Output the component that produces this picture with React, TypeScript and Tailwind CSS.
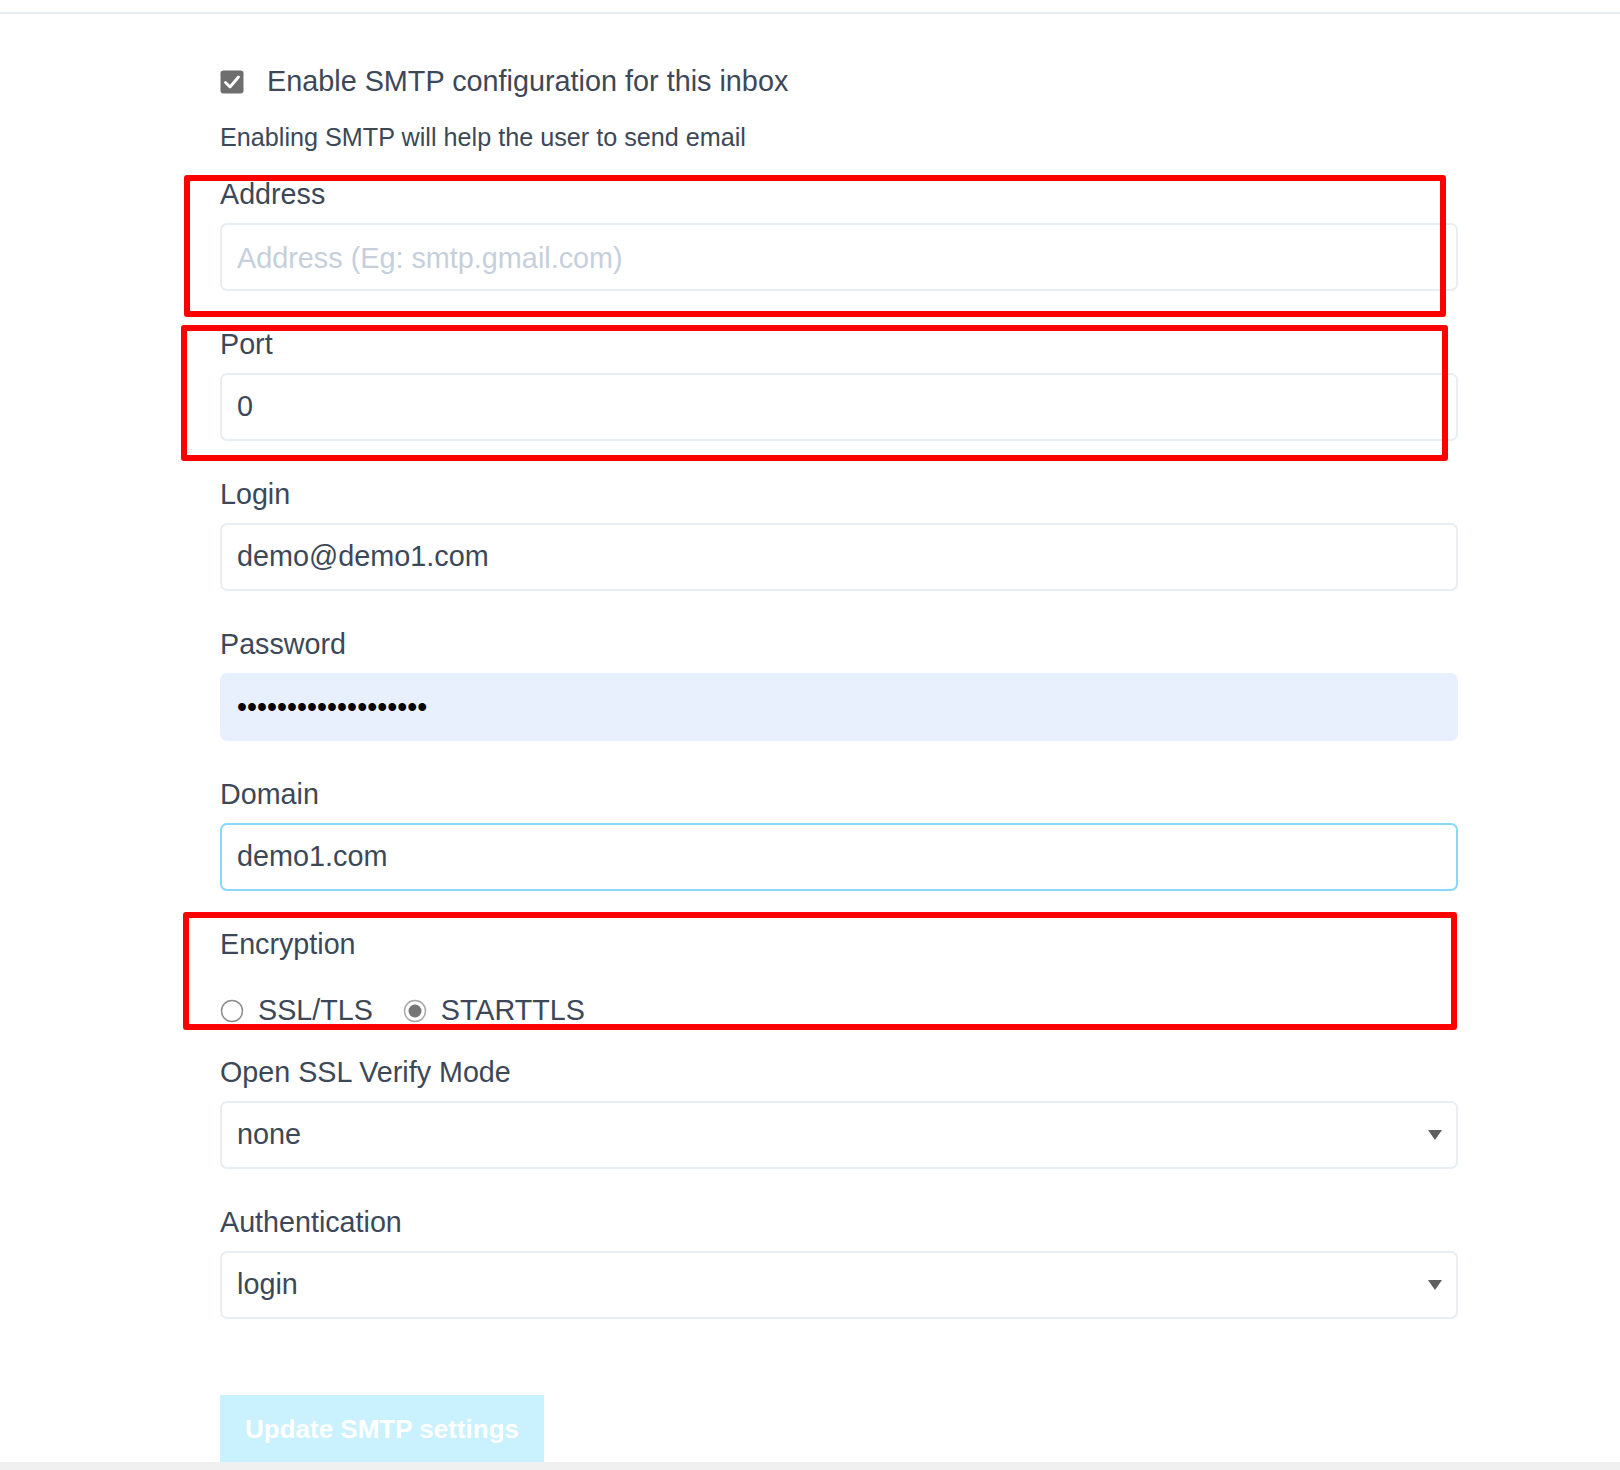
import React from 'react';

const font = { fontFamily: '"Liberation Sans", Arial, sans-serif' };

function Label({ children }: { children: React.ReactNode }) {
  return <div className="h-[36px] leading-[36px] text-[28.7px] text-[#3c4858]">{children}</div>;
}

function Field({ label, children }: { label: string; children: React.ReactNode }) {
  return (
    <div className="flex flex-col">
      <Label>{label}</Label>
      <div className="mt-[11px]">{children}</div>
    </div>
  );
}

function TextBox({ value, placeholder, variant }: { value?: string; placeholder?: string; variant?: 'focus' | 'autofill' }) {
  const box =
    variant === 'focus'
      ? 'border-[#86d9f9] bg-white'
      : variant === 'autofill'
      ? 'border-[#e8f0fe] bg-[#e8f0fe]'
      : 'border-[#e9eef3] bg-white';
  return (
    <div className={`h-[68px] w-full rounded-[7px] border-2 pl-[15px] flex items-center text-[28.8px] ${box}`}>
      {value ? (
        <span className="text-[#3c4858]">{value}</span>
      ) : (
        <span className="text-[#c5d0dc] pt-[4px]">{placeholder}</span>
      )}
    </div>
  );
}

function SelectBox({ value }: { value: string }) {
  return (
    <div className="h-[68px] w-full rounded-[7px] border-2 border-[#e9eef3] bg-white pl-[15px] pr-[14px] flex items-center justify-between text-[28.8px] text-[#3c4858]">
      <span>{value}</span>
      <svg width="14" height="10" viewBox="0 0 14 10">
        <path d="M0 0 H14 L7 10 Z" fill="#5f5f5f" />
      </svg>
    </div>
  );
}

function Radio({ checked, label }: { checked?: boolean; label: string }) {
  return (
    <div className="flex items-center gap-[14px]">
      <svg width="24" height="24" viewBox="0 0 24 24">
        <circle cx="12" cy="12" r="10.5" fill="#fff" stroke={checked ? '#a8a8a8' : '#8c8c8c'} strokeWidth="1.5" />
        {checked && <circle cx="12" cy="12" r="6.5" fill="#767676" />}
      </svg>
      <span className="text-[28.7px] text-[#3c4858]">{label}</span>
    </div>
  );
}

function RedBox({ className }: { className: string }) {
  return <div className={`absolute border-[6px] border-[#ff0000] rounded-[3px] pointer-events-none ${className}`} />;
}

export default function App() {
  return (
    <div className="relative w-[1620px] h-[1470px] bg-white overflow-hidden" style={font}>
      <div className="h-[12px]" />
      <div className="h-[2px] bg-[#e9eef3]" />

      <div className="h-[1448px] overflow-hidden">
        <div className="ml-[220px] w-[1238px] pt-[50px] flex flex-col">
          <div className="h-[36px] flex items-center gap-[23px]">
            <svg width="24" height="24" viewBox="0 0 24 24">
              <rect x="0.5" y="0.5" width="23" height="23" rx="3" fill="#6e6e6e" />
              <path d="M5.5 12.5 L10 17 L18.5 7" fill="none" stroke="#fff" strokeWidth="2.8" strokeLinecap="round" strokeLinejoin="round" />
            </svg>
            <span className="text-[28.8px] text-[#3c4858]">Enable SMTP configuration for this inbox</span>
          </div>

          <div className="mt-[21px] h-[32px] leading-[32px] text-[25.2px] text-[#3c4858]">
            Enabling SMTP will help the user to send email
          </div>

          <div className="mt-[23px] flex flex-col gap-[35px]">
            <Field label="Address">
              <TextBox placeholder="Address (Eg: smtp.gmail.com)" />
            </Field>
            <Field label="Port">
              <TextBox value="0" />
            </Field>
            <Field label="Login">
              <TextBox value="demo@demo1.com" />
            </Field>
            <Field label="Password">
              <div className="h-[68px] w-full rounded-[7px] bg-[#e8f0fe] pl-[17px] flex items-center text-[28.6px] text-black">
                <span className="leading-none">•••••••••••••••••••</span>
              </div>
            </Field>
            <Field label="Domain">
              <TextBox value="demo1.com" variant="focus" />
            </Field>
            <div className="flex flex-col">
              <Label>Encryption</Label>
              <div className="mt-[31px] h-[36px] flex items-center gap-[30px]">
                <Radio label="SSL/TLS" />
                <Radio label="STARTTLS" checked />
              </div>
            </div>
          </div>

          <div className="mt-[25px] flex flex-col gap-[35px]">
            <Field label="Open SSL Verify Mode">
              <SelectBox value="none" />
            </Field>
            <Field label="Authentication">
              <SelectBox value="login" />
            </Field>
          </div>

          <div className="mt-[76px]">
            <button className="h-[68px] w-[324px] bg-[#c9f1fe] text-white text-[26px] font-bold">
              Update SMTP settings
            </button>
          </div>
        </div>
      </div>

      <div className="h-[8px] bg-[#f0f0f0]" />

      <RedBox className="left-[184px] top-[175px] w-[1262px] h-[142px]" />
      <RedBox className="left-[181px] top-[325px] w-[1267px] h-[136px]" />
      <RedBox className="left-[183px] top-[912px] w-[1274px] h-[118px]" />
    </div>
  );
}
